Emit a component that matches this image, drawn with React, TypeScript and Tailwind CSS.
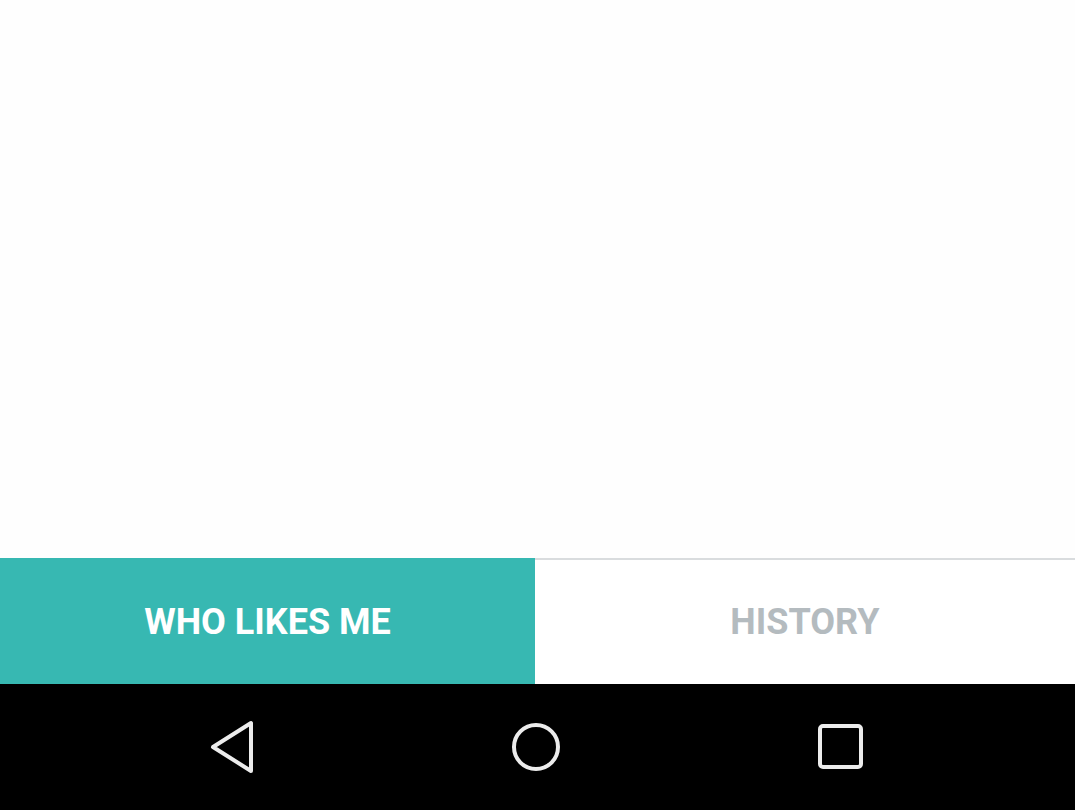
const App = () => {
    return <div className="flex h-[810px] w-[1075px] flex-col bg-white" style={{ fontFamily: 'Roboto, "Liberation Sans", sans-serif' }}>
        <div className="flex-1 bg-[#fefefe]"></div>
        <div className="flex h-[126px]">
            <div className="flex w-[535px] items-center justify-center bg-[#37b8b2] pt-[2px]">
                <span className="text-[36px] font-bold text-white">WHO LIKES ME</span>
            </div>
            <div className="flex flex-1 items-center justify-center border-t-2 border-[#d9dcde] bg-white">
                <span className="text-[36px] font-bold text-[#b4bbbf]">HISTORY</span>
            </div>
        </div>
        <div className="flex h-[126px] items-center bg-black">
            <div className="flex w-[464px] justify-center">
                <svg width="50" height="60" viewBox="0 0 50 60" fill="none" stroke="#ececec" strokeWidth="4" strokeLinejoin="round">
                    <path d="M44 6 L44 54 L6 30 Z" />
                </svg>
            </div>
            <div className="flex w-[144px] justify-center">
                <svg width="52" height="52" viewBox="0 0 52 52" fill="none" stroke="#ececec" strokeWidth="4">
                    <circle cx="26" cy="26" r="22" />
                </svg>
            </div>
            <div className="flex flex-1 justify-start pl-[210px]">
                <svg width="46" height="46" viewBox="0 0 46 46" fill="none" stroke="#ececec" strokeWidth="4">
                    <rect x="2" y="2" width="41" height="41" rx="3" />
                </svg>
            </div>
        </div>
    </div>
}

export default App
